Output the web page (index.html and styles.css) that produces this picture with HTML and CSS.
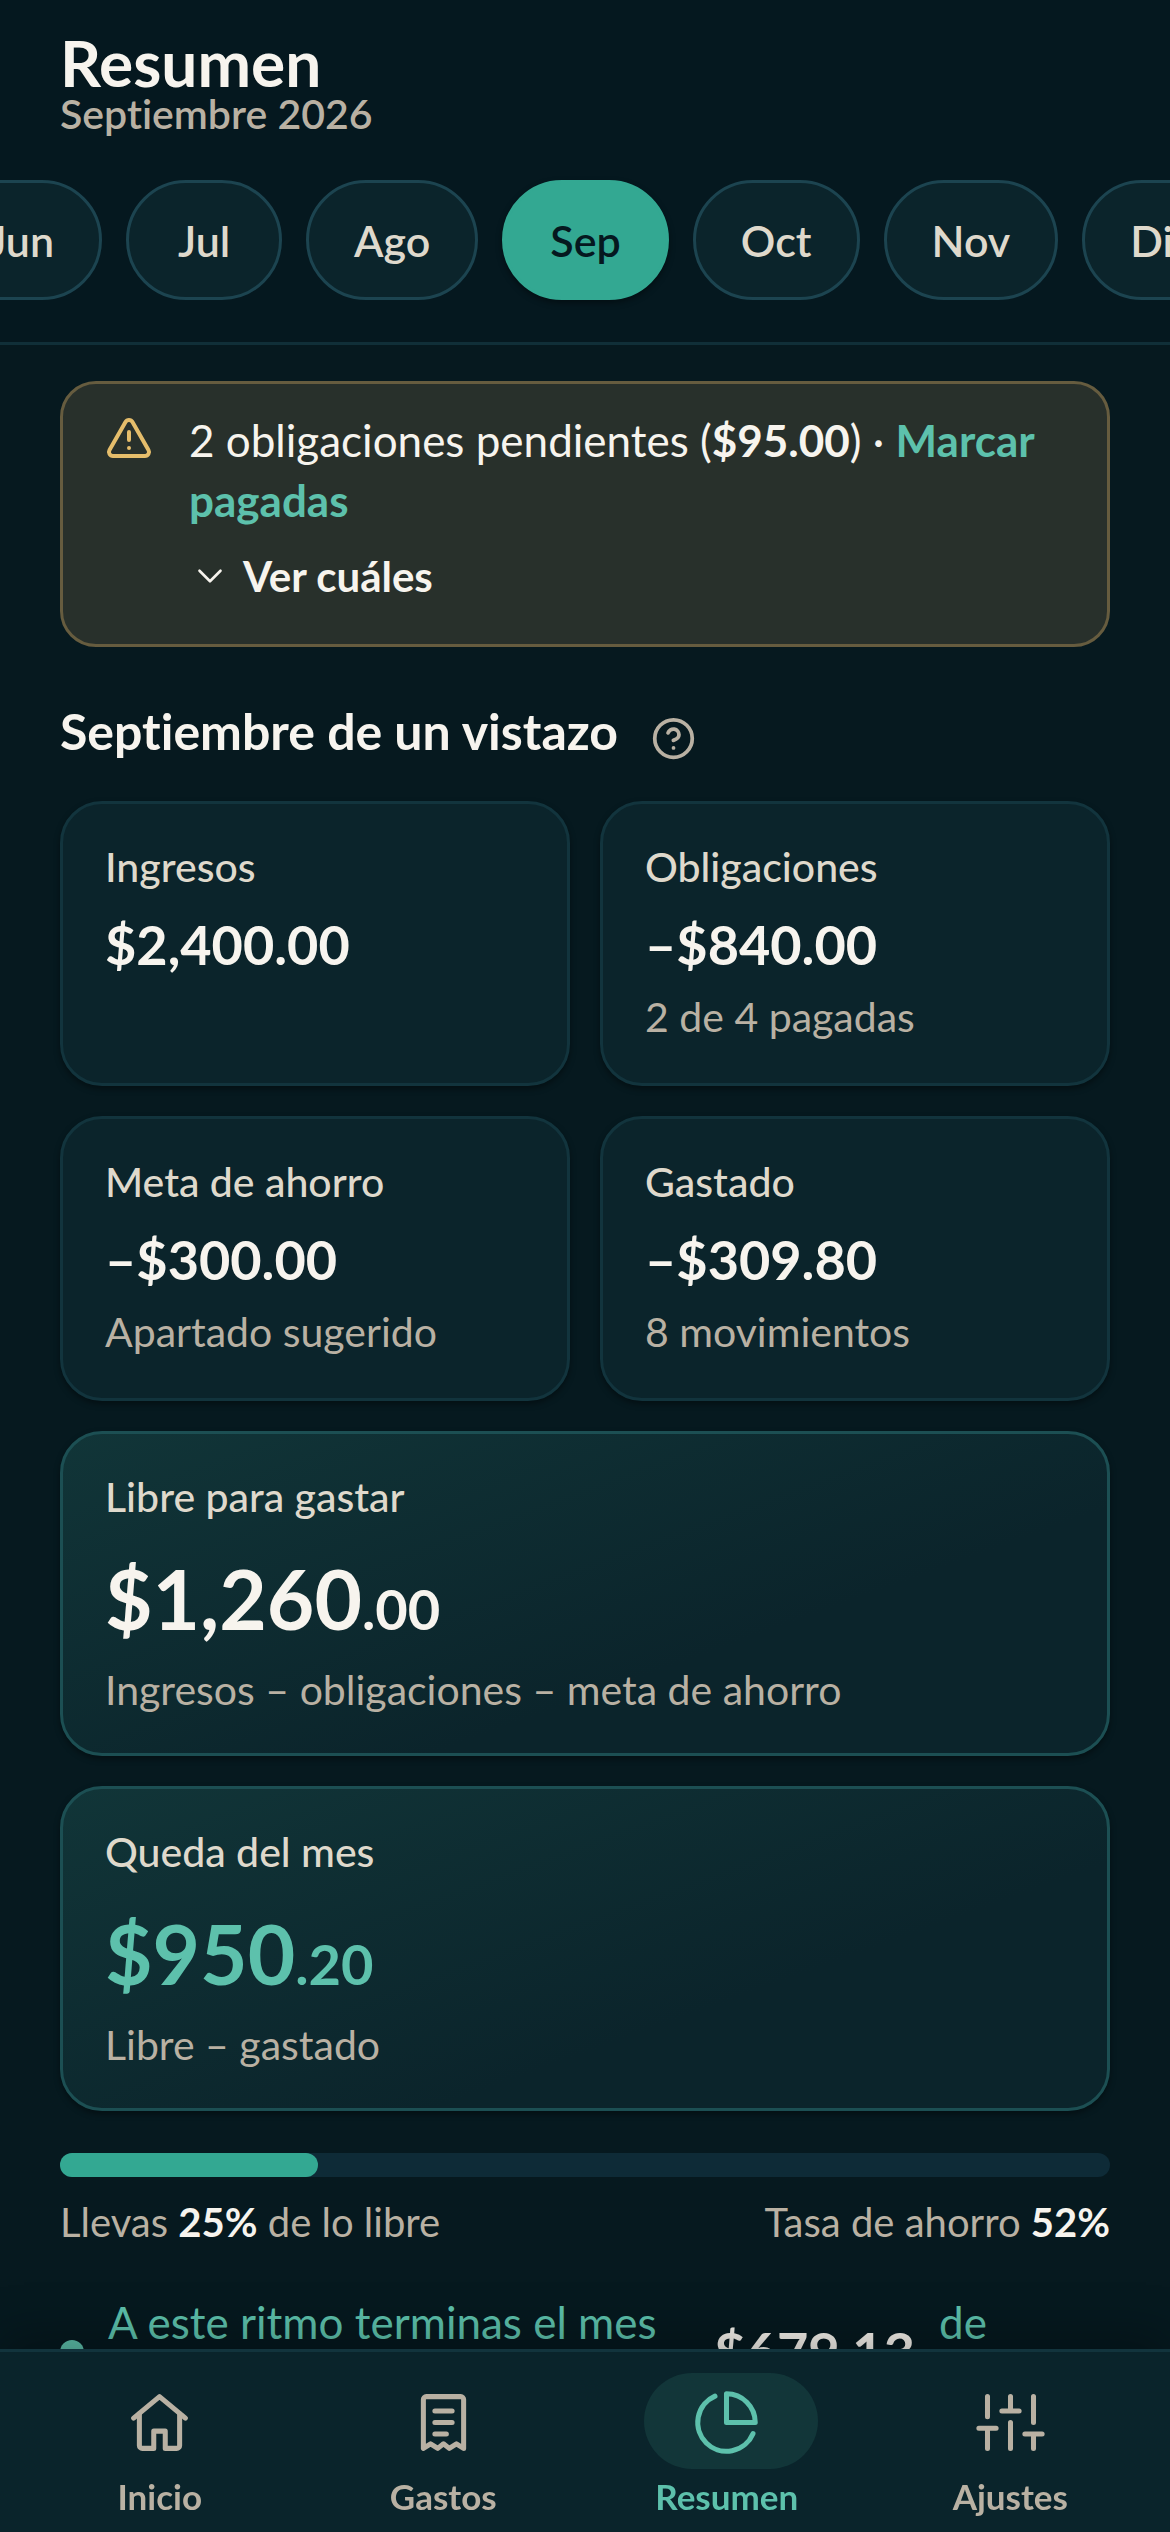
FILE: index.html
```html
<!DOCTYPE html>
<html lang="es">
<head>
    <meta charset="UTF-8">
    <meta name="viewport" content="width=device-width, initial-scale=1.0">
    <title>Resumen</title>
    <link rel="stylesheet" href="styles.css">
</head>
<body>
    <header class="header">
        <h1>Resumen</h1>
        <p class="subtitle">Septiembre 2026</p>
        <div class="months">
            <button type="button" class="month">Jun</button>
            <button type="button" class="month">Jul</button>
            <button type="button" class="month">Ago</button>
            <button type="button" class="month active">Sep</button>
            <button type="button" class="month">Oct</button>
            <button type="button" class="month">Nov</button>
            <button type="button" class="month">Dic</button>
        </div>
    </header>

    <main class="content">
        <section class="alert">
            <svg class="alert-icon" viewBox="0 0 24 24">
                <path d="m21.73 18-8-14a2 2 0 0 0-3.48 0l-8 14A2 2 0 0 0 4 21h16a2 2 0 0 0 1.73-3"/>
                <path d="M12 9v4M12 17h.01"/>
            </svg>
            <div class="alert-body">
                <p>2 obligaciones pendientes (<strong>$95.00</strong>) · <a href="#">Marcar pagadas</a></p>
                <button type="button" class="toggle">
                    <svg viewBox="0 0 24 24"><path d="m6 9 6 6 6-6"/></svg>
                    Ver cuáles
                </button>
            </div>
        </section>

        <div class="section-title">
            <h2>Septiembre de un vistazo</h2>
            <button type="button" class="help" aria-label="Ayuda">
                <svg viewBox="0 0 24 24">
                    <circle cx="12" cy="12" r="10"/>
                    <path d="M9.09 9a3 3 0 0 1 5.83 1c0 2-3 3-3 3M12 17h.01"/>
                </svg>
            </button>
        </div>

        <section class="cards">
            <div class="card">
                <p class="label">Ingresos</p>
                <p class="amount">$2,400.00</p>
            </div>
            <div class="card">
                <p class="label">Obligaciones</p>
                <p class="amount">–$840.00</p>
                <p class="note">2 de 4 pagadas</p>
            </div>
            <div class="card">
                <p class="label">Meta de ahorro</p>
                <p class="amount">–$300.00</p>
                <p class="note">Apartado sugerido</p>
            </div>
            <div class="card">
                <p class="label">Gastado</p>
                <p class="amount">–$309.80</p>
                <p class="note">8 movimientos</p>
            </div>
            <div class="card wide">
                <p class="label">Libre para gastar</p>
                <p class="amount">$1,260<span class="cents">.00</span></p>
                <p class="note">Ingresos – obligaciones – meta de ahorro</p>
            </div>
            <div class="card wide">
                <p class="label">Queda del mes</p>
                <p class="amount positive">$950<span class="cents">.20</span></p>
                <p class="note">Libre – gastado</p>
            </div>
        </section>

        <div class="progress">
            <div class="progress-fill" style="width: 24.6%"></div>
        </div>
        <div class="progress-labels">
            <span>Llevas <strong>25%</strong> de lo libre</span>
            <span>Tasa de ahorro <strong>52%</strong></span>
        </div>

        <div class="forecast">
            <span class="dot"></span>
            <span class="forecast-text">A este ritmo terminas el mes con</span>
            <strong class="forecast-amount">$679.13</strong>
            <span class="forecast-end">de margen</span>
        </div>
    </main>

    <nav class="tabs">
        <span class="indicator"></span>
        <a href="#" class="tab">
            <svg viewBox="0 0 24 24">
                <path d="M3 10.5 12 3l9 7.5"/>
                <path d="M5 9v11a1 1 0 0 0 1 1h4v-6h4v6h4a1 1 0 0 0 1-1V9"/>
            </svg>
            Inicio
        </a>
        <a href="#" class="tab">
            <svg viewBox="0 0 24 24">
                <path d="M5 21V4a1 1 0 0 1 1-1h12a1 1 0 0 1 1 1v17l-2.5-1.6L14 21l-2-1.6L10 21l-2.5-1.6z"/>
                <path d="M9 8h6M9 12h6M9 16h4"/>
            </svg>
            Gastos
        </a>
        <a href="#" class="tab current">
            <svg viewBox="0 0 24 24">
                <path d="M21.21 15.89A10 10 0 1 1 8 2.83"/>
                <path d="M22 12A10 10 0 0 0 12 2v10z"/>
            </svg>
            Resumen
        </a>
        <a href="#" class="tab">
            <svg viewBox="0 0 24 24">
                <path d="M4 21v-7M4 10V3M12 21v-9M12 8V3M20 21v-5M20 12V3M1 14h6M9 8h6M17 16h6"/>
            </svg>
            Ajustes
        </a>
    </nav>
</body>
</html>
```
FILE: styles.css
```css
* {
    box-sizing: border-box;
}
body {
    margin: 0;
    height: 100vh;
    overflow: hidden;
    background-color: #06191f;
    color: #f7f4ee;
    font-family: Lato, sans-serif;
    font-variant-ligatures: none;
}
h1, h2, p {
    margin: 0;
}
button {
    font-family: inherit;
    font-variant-ligatures: none;
    color: inherit;
    background: none;
    border: 0;
    padding: 0;
}
svg {
    display: block;
    flex: none;
    fill: none;
    stroke: currentColor;
    stroke-width: 2;
    stroke-linecap: round;
    stroke-linejoin: round;
}
strong {
    font-weight: 700;
    color: #f7f4ee;
}

/* header */
.header {
    padding: 33px 0 42px;
    background-color: #05181f;
    border-bottom: 3px solid #102f38;
}
h1 {
    padding: 0 60px;
    font-size: 64px;
    line-height: 60px;
    font-weight: 700;
}
.subtitle {
    padding: 0 60px;
    font-size: 41px;
    line-height: 42px;
    font-weight: 600;
    color: #b9b1a3;
}
.months {
    display: flex;
    justify-content: center;
    gap: 24px;
    margin-top: 45px;
    padding-left: 12px;
    overflow-x: clip;
}
.month {
    flex: none;
    height: 120px;
    min-width: 156px;
    padding: 0 45px;
    border: 3px solid #1c4450;
    border-radius: 60px;
    background-color: #0b242b;
    color: #dfd9cc;
    font-size: 43px;
    font-weight: 600;
}
.month.active {
    background-color: #33a892;
    border-color: #33a892;
    color: #05181f;
    box-shadow: 0 3px 6px rgba(0, 0, 0, 0.4);
}

.content {
    padding: 36px 60px 0;
}

/* pending alert */
.alert {
    display: flex;
    gap: 36px;
    padding: 26px 42px 38px;
    border: 3px solid #665c3f;
    border-radius: 36px;
    background-color: #28302b;
    font-size: 44px;
    line-height: 60px;
}
.alert-icon {
    width: 48px;
    height: 48px;
    margin-top: 4px;
    color: #e5bd6b;
}
.alert a {
    color: #5dc1ac;
    font-weight: 700;
    text-decoration: none;
}
.toggle {
    display: flex;
    align-items: center;
    gap: 12px;
    margin-top: 16px;
    font-size: 42px;
    line-height: 60px;
    font-weight: 700;
}
.toggle svg {
    width: 42px;
    height: 42px;
    stroke-width: 1.5;
}

.section-title {
    display: flex;
    align-items: flex-end;
    gap: 33px;
    margin: 54px 0 40px;
}
h2 {
    font-size: 50px;
    line-height: 60px;
    font-weight: 700;
}
.help {
    color: #b9b1a3;
}
.help svg {
    width: 45px;
    height: 45px;
}

/* cards */
.cards {
    display: grid;
    grid-template-columns: 1fr 1fr;
    gap: 30px;
}
.card {
    padding: 39px 42px 42px;
    border: 3px solid #12343d;
    border-radius: 42px;
    background-color: #0b242b;
    box-shadow: 0 3px 6px rgba(0, 0, 0, 0.4);
}
.label {
    font-size: 41px;
    line-height: 48px;
    font-weight: 500;
    color: #dfd9cc;
}
.amount {
    margin-top: 24px;
    font-size: 54px;
    line-height: 60px;
    font-weight: 700;
}
.note {
    margin-top: 18px;
    font-size: 41px;
    line-height: 48px;
    color: #b9b1a3;
}
.wide {
    grid-column: span 2;
    padding-bottom: 39px;
    border-color: #1c4f53;
    background: linear-gradient(160deg, #113538, #0b242b 65%);
}
.wide .amount {
    margin-top: 27px;
    font-size: 82px;
    line-height: 100px;
}
.wide .cents {
    font-size: 56px;
    line-height: 60px;
}
.positive {
    color: #5dc1ac;
}

/* progress */
.progress {
    height: 24px;
    margin-top: 42px;
    border-radius: 12px;
    background-color: #0e2b37;
}
.progress-fill {
    height: 100%;
    border-radius: 12px;
    background-color: #33a892;
}
.progress-labels {
    display: flex;
    justify-content: space-between;
    margin-top: 21px;
    font-size: 40px;
    line-height: 48px;
    color: #b9b1a3;
}

.forecast {
    display: flex;
    align-items: center;
    gap: 24px;
    margin-top: 46px;
    font-size: 44px;
    line-height: 60px;
    color: #5dc1ac;
}
.dot {
    flex: none;
    width: 24px;
    height: 24px;
    border-radius: 50%;
    background-color: #5dc1ac;
}
.forecast-text {
    flex: 1;
}
.forecast-amount {
    font-size: 54px;
}
.forecast-end {
    flex-basis: 171px;
}

/* bottom navigation */
.tabs {
    position: fixed;
    left: 0;
    right: 0;
    bottom: 0;
    display: flex;
    height: 183px;
    padding: 36px 18px 0;
    border-top: 3px solid #12343d;
    background-color: #0a242b;
    box-shadow: 0 -12px 48px rgba(0, 0, 0, 0.3);
}
.tab {
    position: relative;
    flex: 1;
    display: flex;
    flex-direction: column;
    align-items: center;
    gap: 18px;
    color: #b9b1a3;
    font-size: 35px;
    line-height: 42px;
    font-weight: 700;
    text-decoration: none;
}
.tab svg {
    width: 69px;
    height: 69px;
    stroke-width: 1.75;
}
.tab.current {
    color: #5dc1ac;
}
.indicator {
    position: absolute;
    top: 21px;
    left: 55%;
    width: 174px;
    height: 96px;
    border-radius: 48px;
    background-color: #123639;
}
```
